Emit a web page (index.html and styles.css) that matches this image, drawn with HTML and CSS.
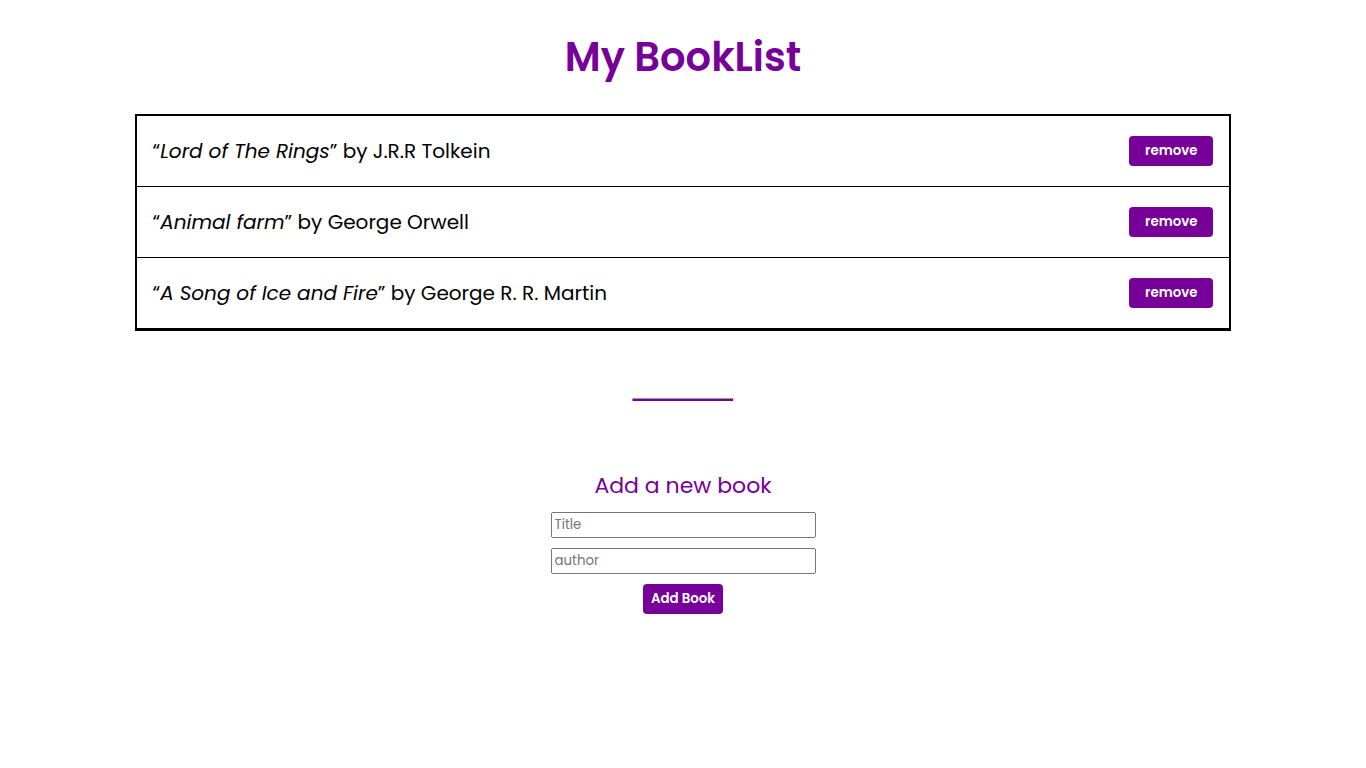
FILE: index.html
```html
<!DOCTYPE html>
<html lang="en">
<head>
<meta charset="utf-8">
<title>My BookList</title>
<link rel="stylesheet" href="styles.css">
</head>
<body>
<main class="page">
  <h1 class="title">My BookList</h1>
  <ul class="books">
    <li class="book"><p class="book-name">“<em>Lord of The Rings</em>” by J.R.R Tolkein</p><button class="btn remove" type="button">remove</button></li>
    <li class="book"><p class="book-name">“<em>Animal farm</em>” by George Orwell</p><button class="btn remove" type="button">remove</button></li>
    <li class="book"><p class="book-name">“<em>A Song of Ice and Fire</em>” by George R. R. Martin</p><button class="btn remove" type="button">remove</button></li>
  </ul>
  <hr class="divider">
  <form class="add-form">
    <h2 class="form-title">Add a new book</h2>
    <input class="field" type="text" placeholder="Title" aria-label="Title">
    <input class="field" type="text" placeholder="author" aria-label="author">
    <button class="btn add" type="button">Add Book</button>
  </form>
</main>
</body>
</html>
```
FILE: styles.css
```css
* {
  box-sizing: border-box;
  margin: 0;
  padding: 0;
}

body {
  font-family: Poppins, Inter, "Open Sans", sans-serif;
  color: #000;
  background: #fff;
}

.page {
  display: flex;
  flex-direction: column;
  align-items: center;
  padding-top: 26px;
}

.title {
  font-size: 40px;
  line-height: 62px;
  font-weight: 600;
  color: #709;
}

.books {
  box-sizing: content-box;
  width: 80%;
  margin-top: 26px;
  border: 2px solid #000;
  list-style: none;
}

.book {
  display: flex;
  align-items: center;
  justify-content: space-between;
  padding: 20px 16px;
  border-bottom: 1px solid #000;
}

.book-name {
  font-size: 20px;
  line-height: 30px;
}

.btn {
  height: 30px;
  padding-bottom: 1px;
  border: 0;
  border-radius: 4px;
  background: #709;
  color: #fff;
  font-family: inherit;
  font-weight: 600;
  white-space: nowrap;
}

.remove {
  padding-inline: 16px;
}

.divider {
  width: 102px;
  height: 3px;
  margin: 67px 0;
  border: 1px solid #9a9a9a;
  border-right-color: #eee;
  border-bottom: 0;
  background: #709;
}

.add-form {
  display: flex;
  flex-direction: column;
  align-items: center;
  gap: 10px;
}

.form-title {
  padding-top: 2px;
  font-size: 22px;
  line-height: 32px;
  font-weight: 400;
  color: #709;
}

.field {
  width: 265px;
  height: 26px;
  padding: 1px 2px 2px;
  font-family: inherit;
}

.add {
  padding-inline: 8px;
}
```
